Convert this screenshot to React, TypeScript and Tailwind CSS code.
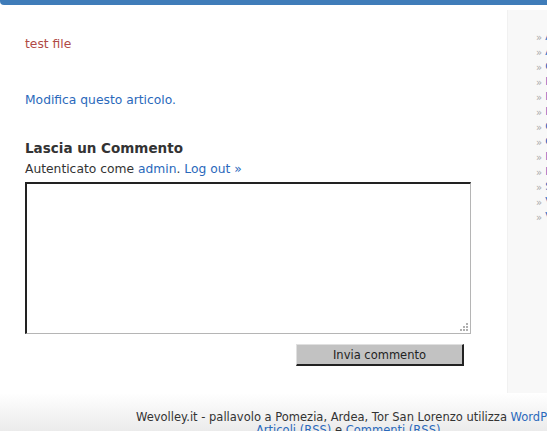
import React from 'react';

const sideLinks = [
  { label: 'Archivio', visited: false },
  { label: 'Allenamenti', visited: false },
  { label: 'Calendario', visited: false },
  { label: 'Iscrizioni', visited: true },
  { label: 'Informazioni', visited: true },
  { label: 'Impianti', visited: true },
  { label: 'Contatti', visited: false },
  { label: 'Classifiche', visited: false },
  { label: 'Il Direttivo', visited: true },
  { label: 'I Risultati', visited: true },
  { label: 'Squadre', visited: false },
  { label: 'Video', visited: false },
  { label: 'Volley Camp', visited: false },
];

export default function App() {
  return (
    <div
      className="w-[547px] h-[431px] overflow-hidden bg-white text-[#333]"
      style={{ fontFamily: '"DejaVu Sans", Verdana, sans-serif' }}
    >
      <div className="h-[5px] bg-[#3f7cb9] rounded-bl-[4px]" />

      <div className="flex h-[388px]">
        <div className="w-[507px] shrink-0 pl-[25px] pr-[36px]">
          <p className="mt-[31px] text-[12.3px] leading-[16px] text-[#b04a45]">test file</p>

          <a className="block mt-[40px] text-[12.3px] leading-[16px] text-[#2a69bb]">
            Modifica questo articolo.
          </a>

          <h3 className="mt-[31px] text-[13.5px] leading-[18px] font-bold text-[#333]">
            Lascia un Commento
          </h3>
          <p className="mt-[4px] text-[12.3px] leading-[16px]">
            Autenticato come <a className="text-[#2a69bb]">admin</a>.{' '}
            <a className="text-[#2a69bb]">Log out »</a>
          </p>

          <div className="relative mt-[5px] w-[446px] h-[152px]">
            <textarea className="block w-full h-full bg-white border-t-2 border-l-2 border-r border-b border-t-[#222] border-l-[#222] border-r-[#b5b5b5] border-b-[#b5b5b5] outline-none resize-none" />
            <svg className="absolute right-[3px] bottom-[3px]" width="9" height="9" viewBox="0 0 9 9">
              <g fill="#b0b0b0">
                <rect x="7" y="1" width="2" height="2" />
                <rect x="4" y="4" width="2" height="2" />
                <rect x="7" y="4" width="2" height="2" />
                <rect x="1" y="7" width="2" height="2" />
                <rect x="4" y="7" width="2" height="2" />
                <rect x="7" y="7" width="2" height="2" />
              </g>
            </svg>
          </div>

          <div className="flex justify-end pr-[7px] mt-[10px]">
            <button className="w-[168px] h-[22px] bg-[#c2c2c2] border-r-2 border-b-2 border-r-[#222] border-b-[#222] border-t border-l border-t-[#e0e0e0] border-l-[#e0e0e0] text-[11.5px] leading-[18px] text-[#222]">
              Invia commento
            </button>
          </div>
        </div>

        <div className="flex-1 mt-[5px] bg-[#f8f8f8] border-l border-l-[#f1f1f1] pl-[28px] pt-[20px] whitespace-nowrap">
          {sideLinks.map((l) => (
            <div key={l.label} className="flex items-center h-[15px] text-[11px]">
              <span className="text-[#aaa] text-[10px] mr-[3px]">»</span>
              <a className={l.visited ? 'text-[#5b4fc4]' : 'text-[#2a69bb]'}>{l.label}</a>
            </div>
          ))}
        </div>
      </div>

      <div className="h-[38px] bg-gradient-to-b from-white to-[#ebebeb] text-[11.5px] leading-[13px] whitespace-nowrap pt-[18px]">
        <p className="pl-[136px]">
          Wevolley.it - pallavolo a Pomezia, Ardea, Tor San Lorenzo utilizza{' '}
          <a className="text-[#2a69bb]">WordPress</a>
        </p>
        <p className="pl-[256px]">
          <a className="text-[#2a69bb]">Articoli (RSS)</a> e{' '}
          <a className="text-[#2a69bb]">Commenti (RSS)</a>.
        </p>
      </div>
    </div>
  );
}
